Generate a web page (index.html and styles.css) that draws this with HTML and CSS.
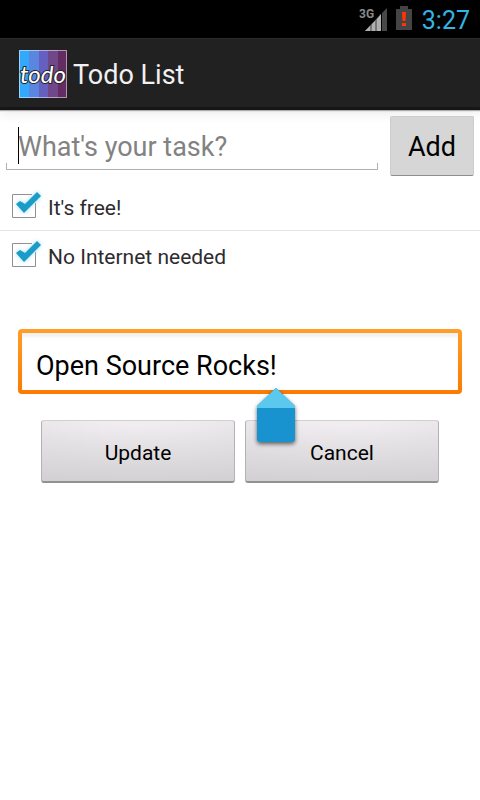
FILE: index.html
```html
<!DOCTYPE html>
<html lang="en">
<head>
<meta charset="utf-8">
<meta name="viewport" content="width=device-width, initial-scale=1">
<title>Todo List</title>
<link rel="stylesheet" href="styles.css">
</head>
<body>
<div class="status">
  <svg class="signal" width="28" height="26" viewBox="0 0 28 26" aria-hidden="true">
    <path d="M6 26 22 9V26Z" fill="#777"/>
    <path d="M6 26 11 21V26ZM13 19 16 16V26H13ZM18 14 22 9V26H18Z" fill="#b0b0b0"/>
    <path d="M23 8 28 3V26H23Z" fill="#484848"/>
    <text x="0" y="13" class="network">3G</text>
  </svg>
  <svg class="battery" width="16" height="24" viewBox="0 0 16 24" aria-hidden="true">
    <path d="M4 0H12V3H16V24H0V3H4Z" fill="#444"/>
    <path d="M6 6H10L9.500 15H6.500ZM6 17H10V20H6Z" fill="#ff3405"/>
  </svg>
  <time class="clock">3:27</time>
</div>
<header class="bar">
  <svg class="logo" width="48" height="48" viewBox="0 0 48 48" aria-hidden="true">
    <path d="M0 0H10V48H0Z" fill="#33a9fb"/>
    <path d="M10 0H20V48H10Z" fill="#5b86df"/>
    <path d="M20 0H29V48H20Z" fill="#655fc0"/>
    <path d="M29 0H39V48H29Z" fill="#704789"/>
    <path d="M39 0H48V48H39Z" fill="#632c62"/>
    <path d="M.5 .5H47.500V47.500H.5Z" fill="none" stroke="#fff" stroke-opacity=".5"/>
    <text x="24" y="33" class="wordmark">todo</text>
  </svg>
  <h1 class="title">Todo List</h1>
</header>
<main>
  <form class="add">
    <div class="entry">
      <input class="task" type="text" placeholder="What's your task?" aria-label="What's your task?">
      <span class="caret"></span>
    </div>
    <button class="add-button" type="button">Add</button>
  </form>
  <ul class="list">
    <li class="item"><label class="row"><input class="check" type="checkbox" checked>
      <svg class="tick" width="32" height="32" viewBox="0 0 32 32" aria-hidden="true"><path d="M24 4.500H4.500V27.500H27.500V13" fill="none" stroke="#918f94"/><path class="mark" d="M8 14 12 11 17 14 29 2 33 6 16 23Z"/></svg>
      It's free!</label></li>
    <li class="item"><label class="row"><input class="check" type="checkbox" checked>
      <svg class="tick" width="32" height="32" viewBox="0 0 32 32" aria-hidden="true"><path d="M24 4.500H4.500V27.500H27.500V13" fill="none" stroke="#918f94"/><path class="mark" d="M8 14 12 11 17 14 29 2 33 6 16 23Z"/></svg>
      No Internet needed</label></li>
  </ul>
  <form class="edit">
    <div class="field">
      <input class="edit-input" type="text" value="Open Source Rocks!" aria-label="Edit task">
      <svg class="handle" width="48" height="64" viewBox="0 0 48 64" aria-hidden="true">
        <path d="M24 4 43 22V55Q43 58 40 58H8Q5 58 5 55V22Z" fill="#1992d0"/>
        <path d="M24 4 43 22V24H5V22Z" fill="#5bc9ee"/>
      </svg>
    </div>
    <div class="actions">
      <button class="action" type="button">Update</button>
      <button class="action" type="button">Cancel</button>
    </div>
  </form>
</main>
</body>
</html>
```
FILE: styles.css
```css
* {
  box-sizing: border-box;
}

body {
  margin: 0;
  background: #fff;
  color: #000;
  font-family: Roboto, "Liberation Sans", sans-serif;
}

input,
button {
  font: inherit;
  color: inherit;
}

.status {
  position: relative;
  z-index: 1;
  display: flex;
  justify-content: flex-end;
  align-items: center;
  height: 38px;
  padding-top: 2px;
  padding-right: 10px;
  background: #000;
}

.signal {
  margin-right: 9px;
  margin-bottom: 4px;
}

.network {
  fill: #8a8a8a;
  font: bold 12px Roboto, sans-serif;
}

.battery {
  margin-right: 10px;
  margin-bottom: 4px;
}

.clock {
  color: #33b5e5;
  font-size: 25px;
  font-weight: 400;
}

.bar {
  display: flex;
  align-items: center;
  gap: 6px;
  height: 72px;
  padding-left: 19px;
  border-top: 1px solid #2c2c2c;
  border-bottom: 3px solid #161616;
  background: #212121;
  box-shadow: 0 1px 1px #aaa, 0 2px 12px #e9e4e8;
}

.logo {
  margin-top: 2px;
}

.wordmark {
  fill: #fff;
  stroke: #222;
  stroke-width: 2px;
  paint-order: stroke;
  text-anchor: middle;
  font: italic 24px Lato, cursive;
}

.title {
  margin: 4px 0 0;
  color: #f3f0f3;
  font-size: 27px;
  font-weight: 400;
}

.add {
  display: flex;
  gap: 12px;
  padding: 6px 6px 5px;
}

.entry {
  position: relative;
  flex: 1;
  height: 54px;
}

.entry::after {
  content: "";
  position: absolute;
  inset: auto 0 0;
  height: 6px;
  border: 1px solid #b0b0b0;
  border-top: 0;
}

.task {
  width: 100%;
  height: 54px;
  padding: 8px 12px 0;
  border: 0;
  outline: 0;
  background: transparent;
  font-size: 27px;
}

.task::placeholder {
  color: #828282;
  opacity: 1;
}

.caret {
  position: absolute;
  top: 11px;
  left: 12px;
  width: 1px;
  height: 37px;
  background: #000;
}

.add-button {
  width: 84px;
  height: 60px;
  padding: 2px 0 0;
  border: 1px solid #ccc;
  border-bottom-color: #8e8e8e;
  border-radius: 2px;
  background: #d6d6d6;
  font-size: 27px;
}

.list {
  margin: 0;
  padding: 0;
  list-style: none;
}

.item + .item {
  border-top: 1px solid #e3e3e3;
}

.row {
  display: flex;
  align-items: center;
  gap: 8px;
  height: 48px;
  padding-left: 8px;
  color: #2e2b2e;
  font-size: 21px;
  padding-top: 4px;
}

.item:first-child .row {
  height: 49px;
}

.check {
  position: absolute;
  opacity: 0;
}

.tick {
  margin-bottom: 4px;
  overflow: visible;
}

.mark {
  fill: #1b9bc8;
  filter: drop-shadow(0 0 2px #9bdcf5);
}

.edit {
  padding: 50px 18px;
}

.field {
  position: relative;
  height: 65px;
  padding: 4px;
  border-radius: 4px;
  background: linear-gradient(#ff9e29, #fc7a02);
}

.edit-input {
  display: block;
  width: 100%;
  height: 57px;
  padding: 8px 14px 0;
  border: 0;
  outline: 0;
  background: #fff;
  box-shadow: inset 0 4px 3px #f3f2f3;
  font-size: 27px;
}

.handle {
  position: absolute;
  top: 55px;
  left: 234px;
  filter: drop-shadow(0 2px 2px #0009);
}

.actions {
  display: flex;
  gap: 10px;
  padding: 26px 23px 0;
}

.action {
  flex: 1;
  height: 63px;
  padding: 3px 0 0;
  border: 1px solid #b4b2b4;
  border-top-color: #d0d0d0;
  border-bottom: 2px solid #929092;
  border-radius: 3px;
  background: radial-gradient(ellipse 160% 120% at 50% -20%, #f1edf1 20%, #e3e0e3 55%, #d3d1d3 100%);
  font-size: 21px;
}
```
